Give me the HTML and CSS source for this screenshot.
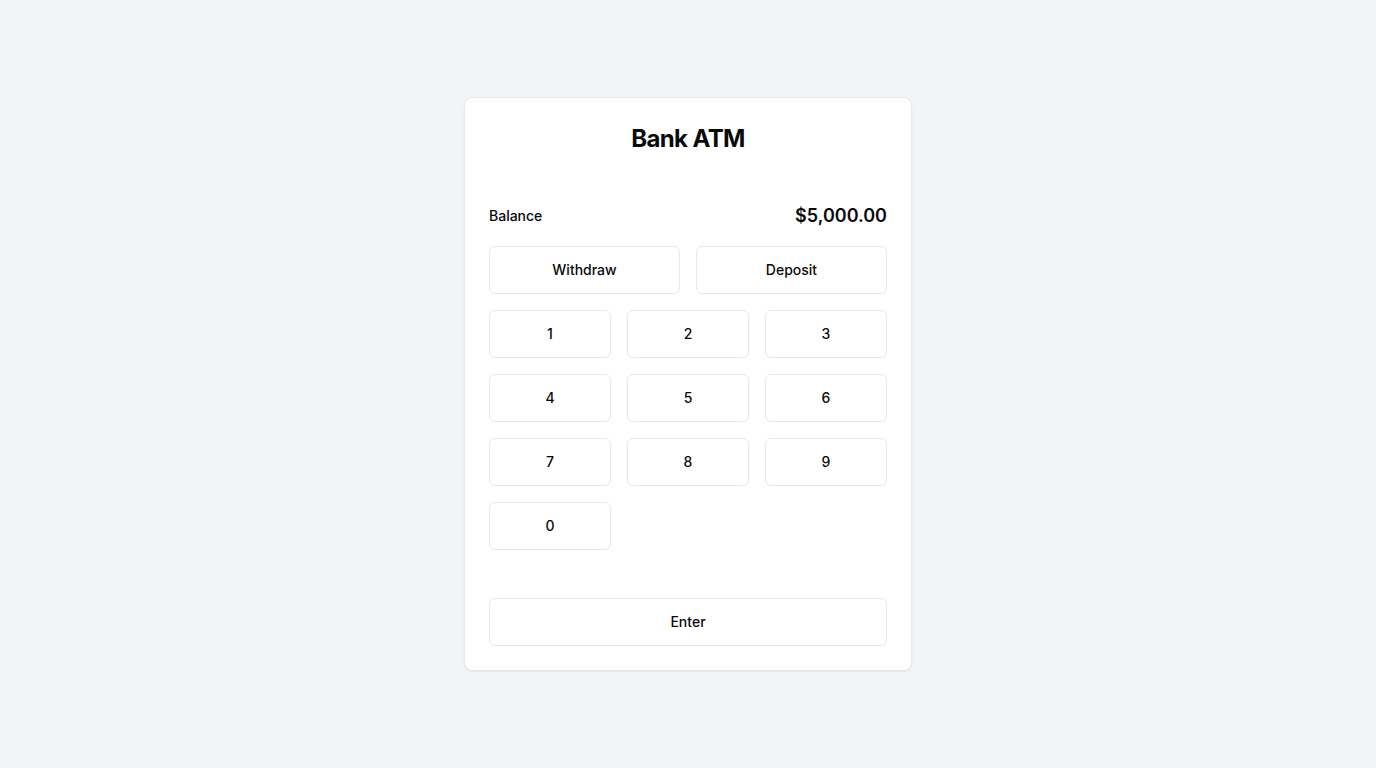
FILE: index.html
```html
<!DOCTYPE html>
<html>
<head>
<meta charset="utf-8">
<link rel="stylesheet" href="styles.css">
</head>
<body>
<main class="page">
  <section class="card">
    <h1 class="title">Bank ATM</h1>
    <div class="balance">
      <span class="balance-label">Balance</span>
      <span class="balance-amount">$5,000.00</span>
    </div>
    <div class="actions">
      <button class="btn">Withdraw</button>
      <button class="btn">Deposit</button>
    </div>
    <div class="keypad">
      <button class="btn">1</button>
      <button class="btn">2</button>
      <button class="btn">3</button>
      <button class="btn">4</button>
      <button class="btn">5</button>
      <button class="btn">6</button>
      <button class="btn">7</button>
      <button class="btn">8</button>
      <button class="btn">9</button>
      <button class="btn">0</button>
    </div>
    <button class="btn btn-enter">Enter</button>
  </section>
</main>
</body>
</html>
```
FILE: styles.css
```css
* { box-sizing: border-box; }
html, body { margin: 0; padding: 0; }
body {
  background: #f3f4f6;
  font-family: Inter, "Noto Sans", sans-serif;
  color: #0a0a0a;
}
.page {
  min-height: 768px;
  display: flex;
  align-items: center;
  justify-content: center;
}
.card {
  width: 448px;
  background: #ffffff;
  border: 1px solid #e5e7eb;
  border-radius: 8px;
  box-shadow: 0 1px 2px rgba(0,0,0,0.05);
  padding: 24px;
  display: flex;
  flex-direction: column;
}
.title {
  margin: 1px 0 46px;
  font-size: 24px;
  line-height: 32px;
  font-weight: 700;
  letter-spacing: -0.025em;
  text-align: center;
  color: #0a0a0a;
}
.balance {
  display: flex;
  justify-content: space-between;
  align-items: center;
  height: 28px;
  margin-bottom: 17px;
}
.balance-label {
  font-size: 14px;
  font-weight: 450;
  color: #0a0a0a;
}
.balance-amount {
  font-size: 18px;
  font-weight: 600;
  color: #0a0a0a;
}
.actions {
  display: grid;
  grid-template-columns: 1fr 1fr;
  gap: 16px;
  margin-bottom: 16px;
}
.keypad {
  display: grid;
  grid-template-columns: repeat(3, 1fr);
  gap: 16px;
  margin-bottom: 48px;
}
.btn {
  height: 48px;
  background: #ffffff;
  border: 1px solid #e5e7eb;
  border-radius: 6px;
  font-family: inherit;
  font-size: 14px;
  font-weight: 450;
  line-height: 20px;
  color: #0a0a0a;
  padding: 0 0 1px;
}
.btn-enter {
  width: 100%;
}
```
